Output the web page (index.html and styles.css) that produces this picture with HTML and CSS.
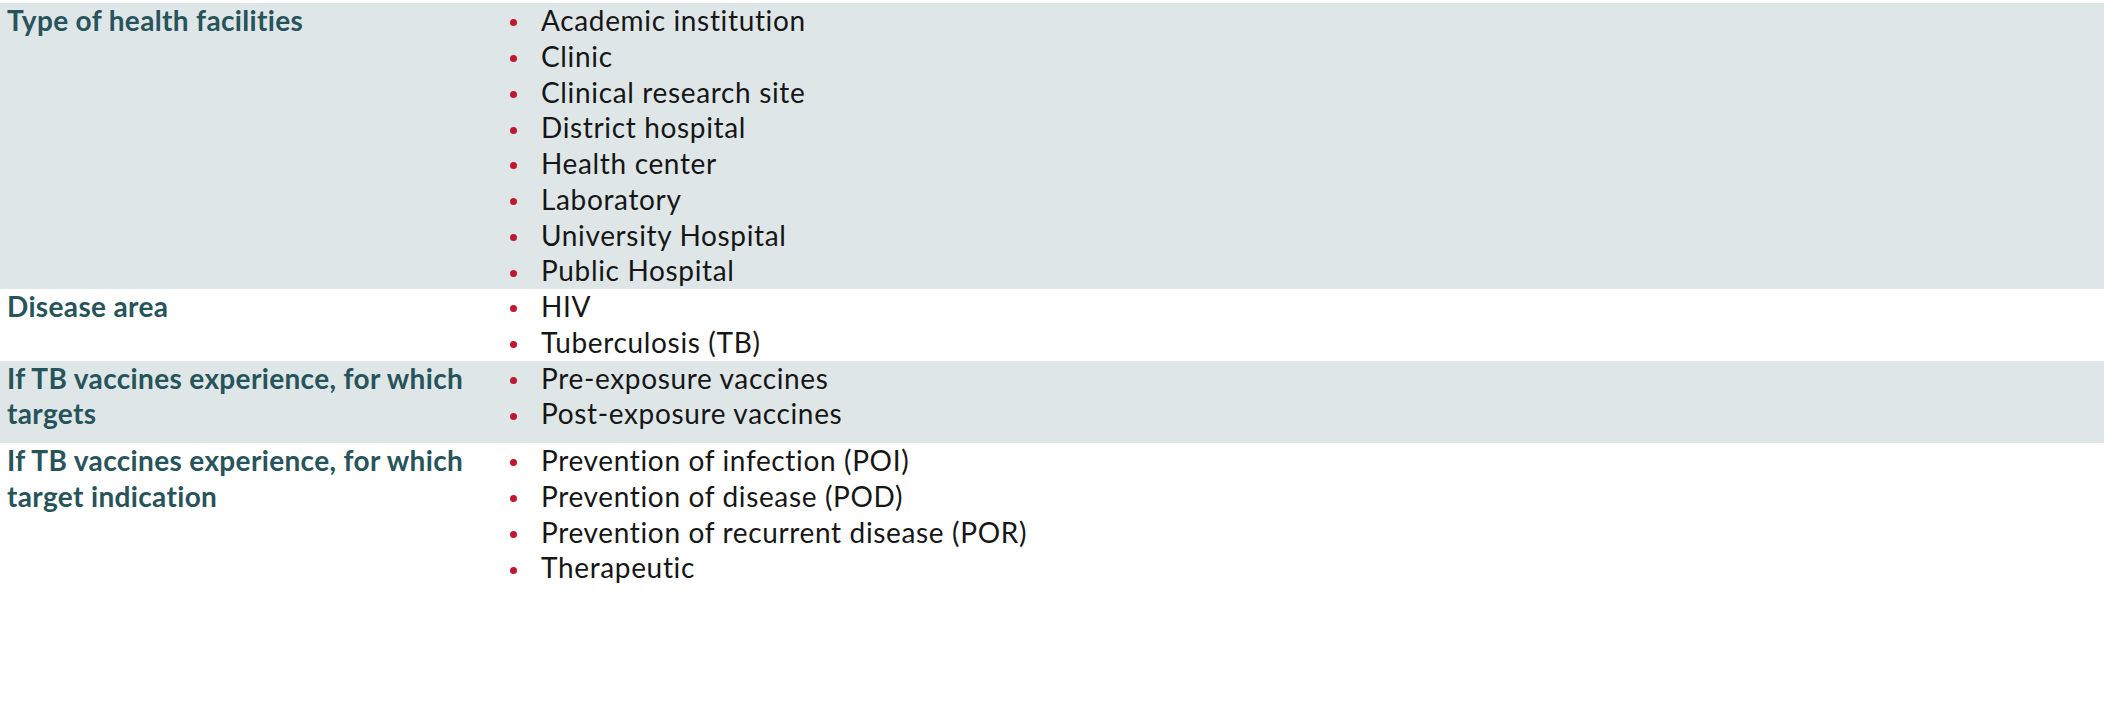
FILE: index.html
```html
<!DOCTYPE html>
<html lang="en">
<head>
<meta charset="utf-8">
<title>Facilities table</title>
<link rel="stylesheet" href="styles.css">
</head>
<body>
<div class="table">
  <div class="row shaded">
    <div class="label">Type of health facilities</div>
    <ul class="items">
      <li>Academic institution</li>
      <li>Clinic</li>
      <li>Clinical research site</li>
      <li>District hospital</li>
      <li>Health center</li>
      <li>Laboratory</li>
      <li>University Hospital</li>
      <li>Public Hospital</li>
    </ul>
  </div>
  <div class="row">
    <div class="label">Disease area</div>
    <ul class="items">
      <li>HIV</li>
      <li>Tuberculosis (TB)</li>
    </ul>
  </div>
  <div class="row shaded">
    <div class="label">If TB vaccines experience, for which targets</div>
    <ul class="items">
      <li>Pre-exposure vaccines</li>
      <li>Post-exposure vaccines</li>
    </ul>
  </div>
  <div class="row">
    <div class="label">If TB vaccines experience, for which target indication</div>
    <ul class="items">
      <li>Prevention of infection (POI)</li>
      <li>Prevention of disease (POD)</li>
      <li>Prevention of recurrent disease (POR)</li>
      <li>Therapeutic</li>
    </ul>
  </div>
</div>
</body>
</html>
```
FILE: styles.css
```css
html, body {
  margin: 0;
  padding: 0;
  background: #ffffff;
}
body {
  padding-top: 3px;
  font-family: Lato, "Open Sans", sans-serif;
  font-size: 28px;
  line-height: 35.75px;
  color: #161616;
}
.table {
  display: flex;
  flex-direction: column;
}
.row {
  display: grid;
  grid-template-columns: 496px 1fr;
  align-items: start;
}
.row.shaded {
  background: #dfe6e8;
}
.label {
  padding-left: 7px;
  margin-bottom: 11px;
  font-weight: 700;
  color: #27545a;
  letter-spacing: 0.35px;
}
.items {
  list-style: none;
  margin: 0;
  padding: 0;
  letter-spacing: 0.65px;
}
.items li {
  display: flex;
  align-items: center;
}
.items li::before {
  content: "";
  flex: none;
  width: 7px;
  height: 7px;
  border-radius: 50%;
  background: #c2162f;
  margin-left: 14px;
  margin-right: 24px;
  margin-top: 4px;
}
```
